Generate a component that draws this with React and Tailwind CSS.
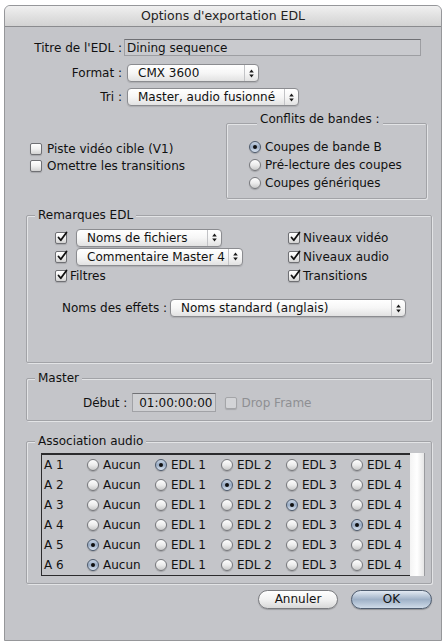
import React from "react";

const Check = ({ checked, disabled }) => (
  <span
    className={`relative inline-block h-[12px] w-[12px] shrink-0 rounded-[2px] border ${
      disabled ? "border-[#a4a5a8] bg-[#d3d4d7]" : "border-[#6f7074] bg-gradient-to-b from-white via-[#f1f1f1] to-[#d2d2d2]"
    } shadow-[0_1px_1px_rgba(0,0,0,0.15)]`}
  >
    {checked && (
      <svg className="absolute -top-[2px] left-[0px]" width="12" height="12" viewBox="0 0 12 12">
        <path d="M2.5 6.5 L4.8 9.3 L10.5 1.5" fill="none" stroke="#111" strokeWidth="1.8" strokeLinecap="round" strokeLinejoin="round" />
      </svg>
    )}
  </span>
);

const Radio = ({ on }) => (
  <span
    className={`flex h-[12px] w-[12px] shrink-0 items-center justify-center rounded-full border ${
      on ? "border-[#4d5a6c] bg-gradient-to-b from-[#c9d5e4] via-[#98abc4] to-[#dde6f1]" : "border-[#77787c] bg-gradient-to-b from-[#fefefe] via-[#ececec] to-[#c9c9c9]"
    } shadow-[0_1px_1px_rgba(0,0,0,0.18)]`}
  >
    {on && <span className="h-[4px] w-[4px] rounded-full bg-[#101010]" />}
  </span>
);

const Popup = ({ label, className }) => (
  <div
    className={`flex h-[18px] items-stretch overflow-hidden rounded-[4px] border border-[#8b8c90] bg-gradient-to-b from-white via-[#f6f6f6] to-[#e2e2e2] shadow-[0_1px_1px_rgba(0,0,0,0.12)] ${className}`}
  >
    <span className="flex-1 truncate pl-[10px] leading-[16px]">{label}</span>
    <span className="flex w-[14px] items-center justify-center border-l border-[#c2c3c6]">
      <svg width="5" height="9" viewBox="0 0 5 9">
        <path d="M2.5 0.5 L4.8 3.4 H0.2Z M0.2 5.6 H4.8 L2.5 8.5Z" fill="#1b1b1b" />
      </svg>
    </span>
  </div>
);

const Group = ({ title, className, legendClass = "", children }) => (
  <fieldset
    className={`rounded-[2px] border border-[#a2a3a7] shadow-[inset_1px_1px_0_#e3e4e6,1px_1px_0_#e3e4e6] ${className}`}
  >
    <legend className={`ml-[8px] bg-[#c4c5c9] px-[3px] leading-[14px] ${legendClass}`}>{title}</legend>
    {children}
  </fieldset>
);

const rows = [
  ["A 1", 1],
  ["A 2", 2],
  ["A 3", 3],
  ["A 4", 4],
  ["A 5", 0],
  ["A 6", 0],
];
const opts = ["Aucun", "EDL 1", "EDL 2", "EDL 3", "EDL 4"];

export default function App() {
  return (
    <div className="h-[642px] w-[448px] bg-white pl-[4px] pt-[5px] font-['DejaVu_Sans',sans-serif] text-[12px] text-[#111]">
      <div className="flex h-[636px] w-[438px] flex-col rounded-t-[6px] border border-[#96979a] bg-[#c4c5c9]">
        {/* title bar */}
        <div className="flex h-[21px] shrink-0 items-center justify-center rounded-t-[5px] border-b border-[#8a8b8e] bg-gradient-to-b from-[#f0f0f0] to-[#d2d2d2] text-[12.5px] text-[#222]">
          Options d'exportation EDL
        </div>

        {/* Titre / Format / Tri */}
        <div className="mt-[12px] flex h-[17px] items-center">
          <span className="w-[117px] text-right">Titre de l'EDL :</span>
          <div className="ml-[2px] flex h-[17px] w-[297px] items-center border border-[#9d9ea2] border-t-[#6f7074] bg-[#c9cace] pl-[2px]">
            Dining sequence
          </div>
        </div>
        <div className="mt-[8px] flex items-center">
          <span className="w-[117px] text-right">Format :</span>
          <Popup label="CMX 3600" className="ml-[5px] w-[132px]" />
        </div>
        <div className="mt-[6px] flex items-center">
          <span className="w-[117px] text-right">Tri :</span>
          <Popup label="Master, audio fusionné" className="ml-[5px] w-[172px]" />
        </div>

        {/* options + conflits */}
        <div className="mt-[6px] flex shrink-0 items-start">
          <div className="ml-[25px] mt-[28px] flex w-[196px] flex-col">
            <label className="flex h-[17px] items-center gap-[5px]">
              <Check />
              Piste vidéo cible (V1)
            </label>
            <label className="flex h-[17px] items-center gap-[5px]">
              <Check />
              Omettre les transitions
            </label>
          </div>
          <Group title="Conflits de bandes :" legendClass="pb-[8px]" className="h-[87px] w-[201px] pl-[22px]">
            <div className="mt-[4px] flex flex-col">
              {["Coupes de bande B", "Pré-lecture des coupes", "Coupes génériques"].map((t, i) => (
                <label key={t} className="flex h-[18px] items-center gap-[4px]">
                  <Radio on={i === 0} />
                  {t}
                </label>
              ))}
            </div>
          </Group>
        </div>

        {/* Remarques EDL */}
        <Group title="Remarques EDL" className="ml-[21px] mt-[9px] h-[155px] w-[406px] shrink-0">
          <div className="ml-[28px] mt-[6px] grid grid-cols-[233px_1fr]">
            <div className="flex flex-col">
              <div className="flex h-[19px] items-center gap-[9px]">
                <Check checked />
                <Popup label="Noms de fichiers" className="w-[146px]" />
              </div>
              <div className="flex h-[19px] items-center gap-[9px]">
                <Check checked />
                <Popup label="Commentaire Master 4" className="w-[167px]" />
              </div>
              <label className="flex h-[19px] items-center gap-[3px]">
                <Check checked />
                Filtres
              </label>
            </div>
            <div className="flex flex-col">
              {["Niveaux vidéo", "Niveaux audio", "Transitions"].map((t) => (
                <label key={t} className="flex h-[19px] items-center gap-[3px]">
                  <Check checked />
                  {t}
                </label>
              ))}
            </div>
          </div>
          <div className="ml-[35px] mt-[14px] flex items-center gap-[3px]">
            <span>Noms des effets :</span>
            <Popup label="Noms standard (anglais)" className="w-[236px]" />
          </div>
        </Group>

        {/* Master */}
        <Group title="Master" className="ml-[21px] mt-[8px] h-[50px] w-[406px] shrink-0">
          <div className="ml-[56px] mt-[8px] flex h-[19px] items-center">
            <span>Début :</span>
            <div className="ml-[5px] flex h-[19px] w-[84px] items-center justify-end border border-[#a1a2a6] border-t-[#707175] bg-[#cfd0d3] pr-[3px]">
              01:00:00:00
            </div>
            <span className="ml-[9px] flex">
              <Check disabled />
            </span>
            <span className="ml-[4px] text-[#8e8f93]">Drop Frame</span>
          </div>
        </Group>

        {/* Association audio */}
        <Group title="Association audio" className="ml-[21px] mt-[13px] h-[150px] w-[406px] shrink-0">
          <div className="ml-[14px] mt-[5px] flex">
            <div className="w-[369px] border-b border-l border-t-2 border-[#2b2b2d]">
              {rows.map(([name, sel]) => (
                <div key={name} className="grid h-[20px] grid-cols-[45px_68px_66px_65px_65px_1fr] items-center">
                  <span className="pl-[2px]">{name}</span>
                  {opts.map((o, i) => (
                    <label key={o} className="flex items-center gap-[4px]">
                      <Radio on={i === sel} />
                      {o}
                    </label>
                  ))}
                </div>
              ))}
            </div>
            <div className="w-[15px] border-r border-[#9a9b9f] bg-gradient-to-r from-[#f4f4f4] via-white to-[#e6e6e6]" />
          </div>
        </Group>

        {/* buttons */}
        <div className="mr-[9px] mt-[6px] flex justify-end gap-[13px]">
          <button className="h-[19px] w-[80px] rounded-full border border-[#7a7b7f] bg-gradient-to-b from-white via-[#f2f2f2] to-[#d8d8d8] leading-[17px] text-[#111] shadow-[0_1px_1px_rgba(0,0,0,0.2)]">
            Annuler
          </button>
          <button className="h-[19px] w-[81px] rounded-full border border-[#4f5d70] bg-gradient-to-b from-[#e3eaf3] via-[#9fb1c7] to-[#cfdbe8] leading-[17px] text-[#111] shadow-[0_1px_1px_rgba(0,0,0,0.25)]">
            OK
          </button>
        </div>
      </div>
    </div>
  );
}
